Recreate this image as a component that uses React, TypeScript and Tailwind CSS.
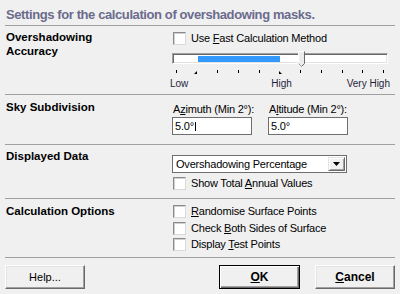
import React from 'react';

const font = "font-['Liberation_Sans',Arial,sans-serif]";

function Check({ label, u }: { label: string; u: number }) {
  return (
    <div className="flex items-center gap-[5px] h-[13px] ml-[1px]">
      <span className="w-[13px] h-[13px] bg-white border border-t-[#8a8a8a] border-l-[#8a8a8a] border-r-[#dadada] border-b-[#dadada] shadow-[inset_1px_1px_0_#d0d0d0]" />
      <span className="text-[11px] leading-[13px] tracking-[-0.2px]">
        {label.slice(0, u)}
        <span className="underline underline-offset-[1px]">{label[u]}</span>
        {label.slice(u + 1)}
      </span>
    </div>
  );
}

function Ticks() {
  const xs = Array.from({ length: 11 }, (_, i) => 3.5 + i * 20.77);
  return (
    <svg width="216" height="4" className="block">
      {xs.map((x, i) => {
        const px = Math.round(x);
        if (i === 1) return <polygon key={i} points={`${px - 2},4 ${px + 1},4 ${px + 1},1`} fill="#000" />;
        if (i === 5) return <polygon key={i} points={`${px},1 ${px},4 ${px + 3},4`} fill="#000" />;
        return <rect key={i} x={px} y={0} width={1} height={3} fill="#000" />;
      })}
    </svg>
  );
}

function Thumb() {
  return (
    <svg width="8" height="17" className="absolute left-[125px] top-[-3px]">
      <polygon points="0.5,0.5 6.5,0.5 6.5,12.5 3.5,15.5 0.5,12.5" fill="#ececec" />
      <polyline points="0.5,12.5 0.5,0.5 6.5,0.5" fill="none" stroke="#ffffff" />
      <polyline points="6.5,0.5 6.5,12.5 3.5,15.5" fill="none" stroke="#696969" />
      <polyline points="0.5,12.5 3.5,15.5" fill="none" stroke="#a0a0a0" />
    </svg>
  );
}

function Field({ value, caret }: { value: string; caret?: boolean }) {
  return (
    <div className="mt-[1px] w-[80px] h-[18px] bg-white border border-[#6e6e6e] flex items-center pl-[2px] text-[11px] leading-[13px]">
      {value}
      {caret && <span className="ml-[1px] w-[1px] h-[9px] bg-black" />}
    </div>
  );
}

function Btn({ children, primary }: { children: React.ReactNode; primary?: boolean }) {
  return (
    <button
      className={
        primary
          ? 'w-[81px] h-[24px] bg-[#f0f0f0] border border-black shadow-[inset_1px_1px_0_#ffffff,inset_-1px_-1px_0_#696969,inset_-2px_-2px_0_#a0a0a0] flex items-center justify-center'
          : 'w-[80px] h-[24px] bg-[#f0f0f0] border border-t-white border-l-white border-r-[#696969] border-b-[#696969] shadow-[inset_-1px_-1px_0_#a0a0a0,inset_1px_1px_0_#e3e3e3] flex items-center justify-center'
      }
    >
      {children}
    </button>
  );
}

export default function App() {
  return (
    <div className={`w-[400px] h-[294px] bg-[#f0f0f0] px-[5px] text-black overflow-hidden ${font}`}>
      <div className="h-[26px] border-b border-[#a0a0a0] pl-[1px] pt-[7px] text-[13px] leading-[15px] font-bold tracking-[-0.4px] text-[#6b6b8d] whitespace-nowrap">
        Settings for the calculation of overshadowing masks.
      </div>

      {/* Overshadowing accuracy */}
      <div className="h-[69px] flex border-b border-[#a0a0a0]">
        <div className="w-[167px] pl-[1px] pt-[4px] text-[11.5px] leading-[14px] font-bold">
          Overshadowing
          <br />
          Accuracy
        </div>
        <div className="pt-[6px]">
          <Check label="Use Fast Calculation Method" u={4} />
          <div className="relative mt-[8px] w-[216px] h-[11px] bg-white border border-t-[#a0a0a0] border-l-[#a0a0a0] border-r-white border-b-white shadow-[inset_1px_1px_0_#696969,inset_-1px_-1px_0_#e3e3e3]">
            <div className="absolute left-[25px] top-[2px] w-[82px] h-[6px] bg-[#3399ff]" />
            <Thumb />
          </div>
          <div className="mt-[6px]">
            <Ticks />
          </div>
          <div className="flex w-[220px] -ml-[2px] mt-[3px] text-[10px] leading-[13px] text-[#1f1f3a]">
            <span>Low</span>
            <span className="ml-[83px]">High</span>
            <span className="ml-auto">Very High</span>
          </div>
        </div>
      </div>

      {/* Sky subdivision */}
      <div className="h-[50px] flex border-b border-[#a0a0a0]">
        <div className="w-[167px] pl-[1px] pt-[5px] text-[11.5px] leading-[14px] font-bold">Sky Subdivision</div>
        <div className="flex gap-[14px] pt-[8px] text-[11px] leading-[13px] tracking-[-0.2px]">
          <div>
            <div className="pl-[1px]">
              A<span className="underline underline-offset-[1px]">z</span>imuth (Min 2°):
            </div>
            <Field value="5.0°" caret />
          </div>
          <div>
            <div className="pl-[1px]">
              A<span className="underline underline-offset-[1px]">l</span>titude (Min 2°):
            </div>
            <Field value="5.0°" />
          </div>
        </div>
      </div>

      {/* Displayed data */}
      <div className="h-[54px] flex border-b border-[#a0a0a0]">
        <div className="w-[167px] pl-[1px] pt-[4px] text-[11.5px] leading-[14px] font-bold">Displayed Data</div>
        <div className="pt-[10px]">
          <div className="w-[175px] h-[18px] bg-white border border-[#6e6e6e] flex items-center justify-between pl-[3px] pr-[1px] text-[11px] leading-[13px] tracking-[-0.2px]">
            <span>Overshadowing Percentage</span>
            <span className="w-[17px] h-[14px] bg-[#f0f0f0] border border-t-[#e3e3e3] border-l-[#e3e3e3] border-r-[#696969] border-b-[#696969] shadow-[inset_1px_1px_0_#ffffff,inset_-1px_-1px_0_#a0a0a0] flex items-center justify-center">
              <svg width="7" height="4">
                <polygon points="0,0 7,0 3.5,4" fill="#000" />
              </svg>
            </span>
          </div>
          <div className="mt-[4px]">
            <Check label="Show Total Annual Values" u={11} />
          </div>
        </div>
      </div>

      {/* Calculation options */}
      <div className="h-[59px] flex border-b border-[#a0a0a0]">
        <div className="w-[167px] pl-[1px] pt-[5px] text-[11.5px] leading-[14px] font-bold">Calculation Options</div>
        <div className="pt-[6px] flex flex-col gap-[3.5px]">
          <Check label="Randomise Surface Points" u={0} />
          <Check label="Check Both Sides of Surface" u={6} />
          <Check label="Display Test Points" u={8} />
        </div>
      </div>

      {/* Buttons */}
      <div className="flex pt-[7px] text-[11px]">
        <Btn>Help...</Btn>
        <div className="ml-auto flex gap-[15px] text-[12px] font-bold">
          <Btn primary>
            <span className="underline underline-offset-[1px]">O</span>K
          </Btn>
          <Btn>
            <span>
              <span className="underline underline-offset-[1px]">C</span>ancel
            </span>
          </Btn>
        </div>
      </div>
    </div>
  );
}
